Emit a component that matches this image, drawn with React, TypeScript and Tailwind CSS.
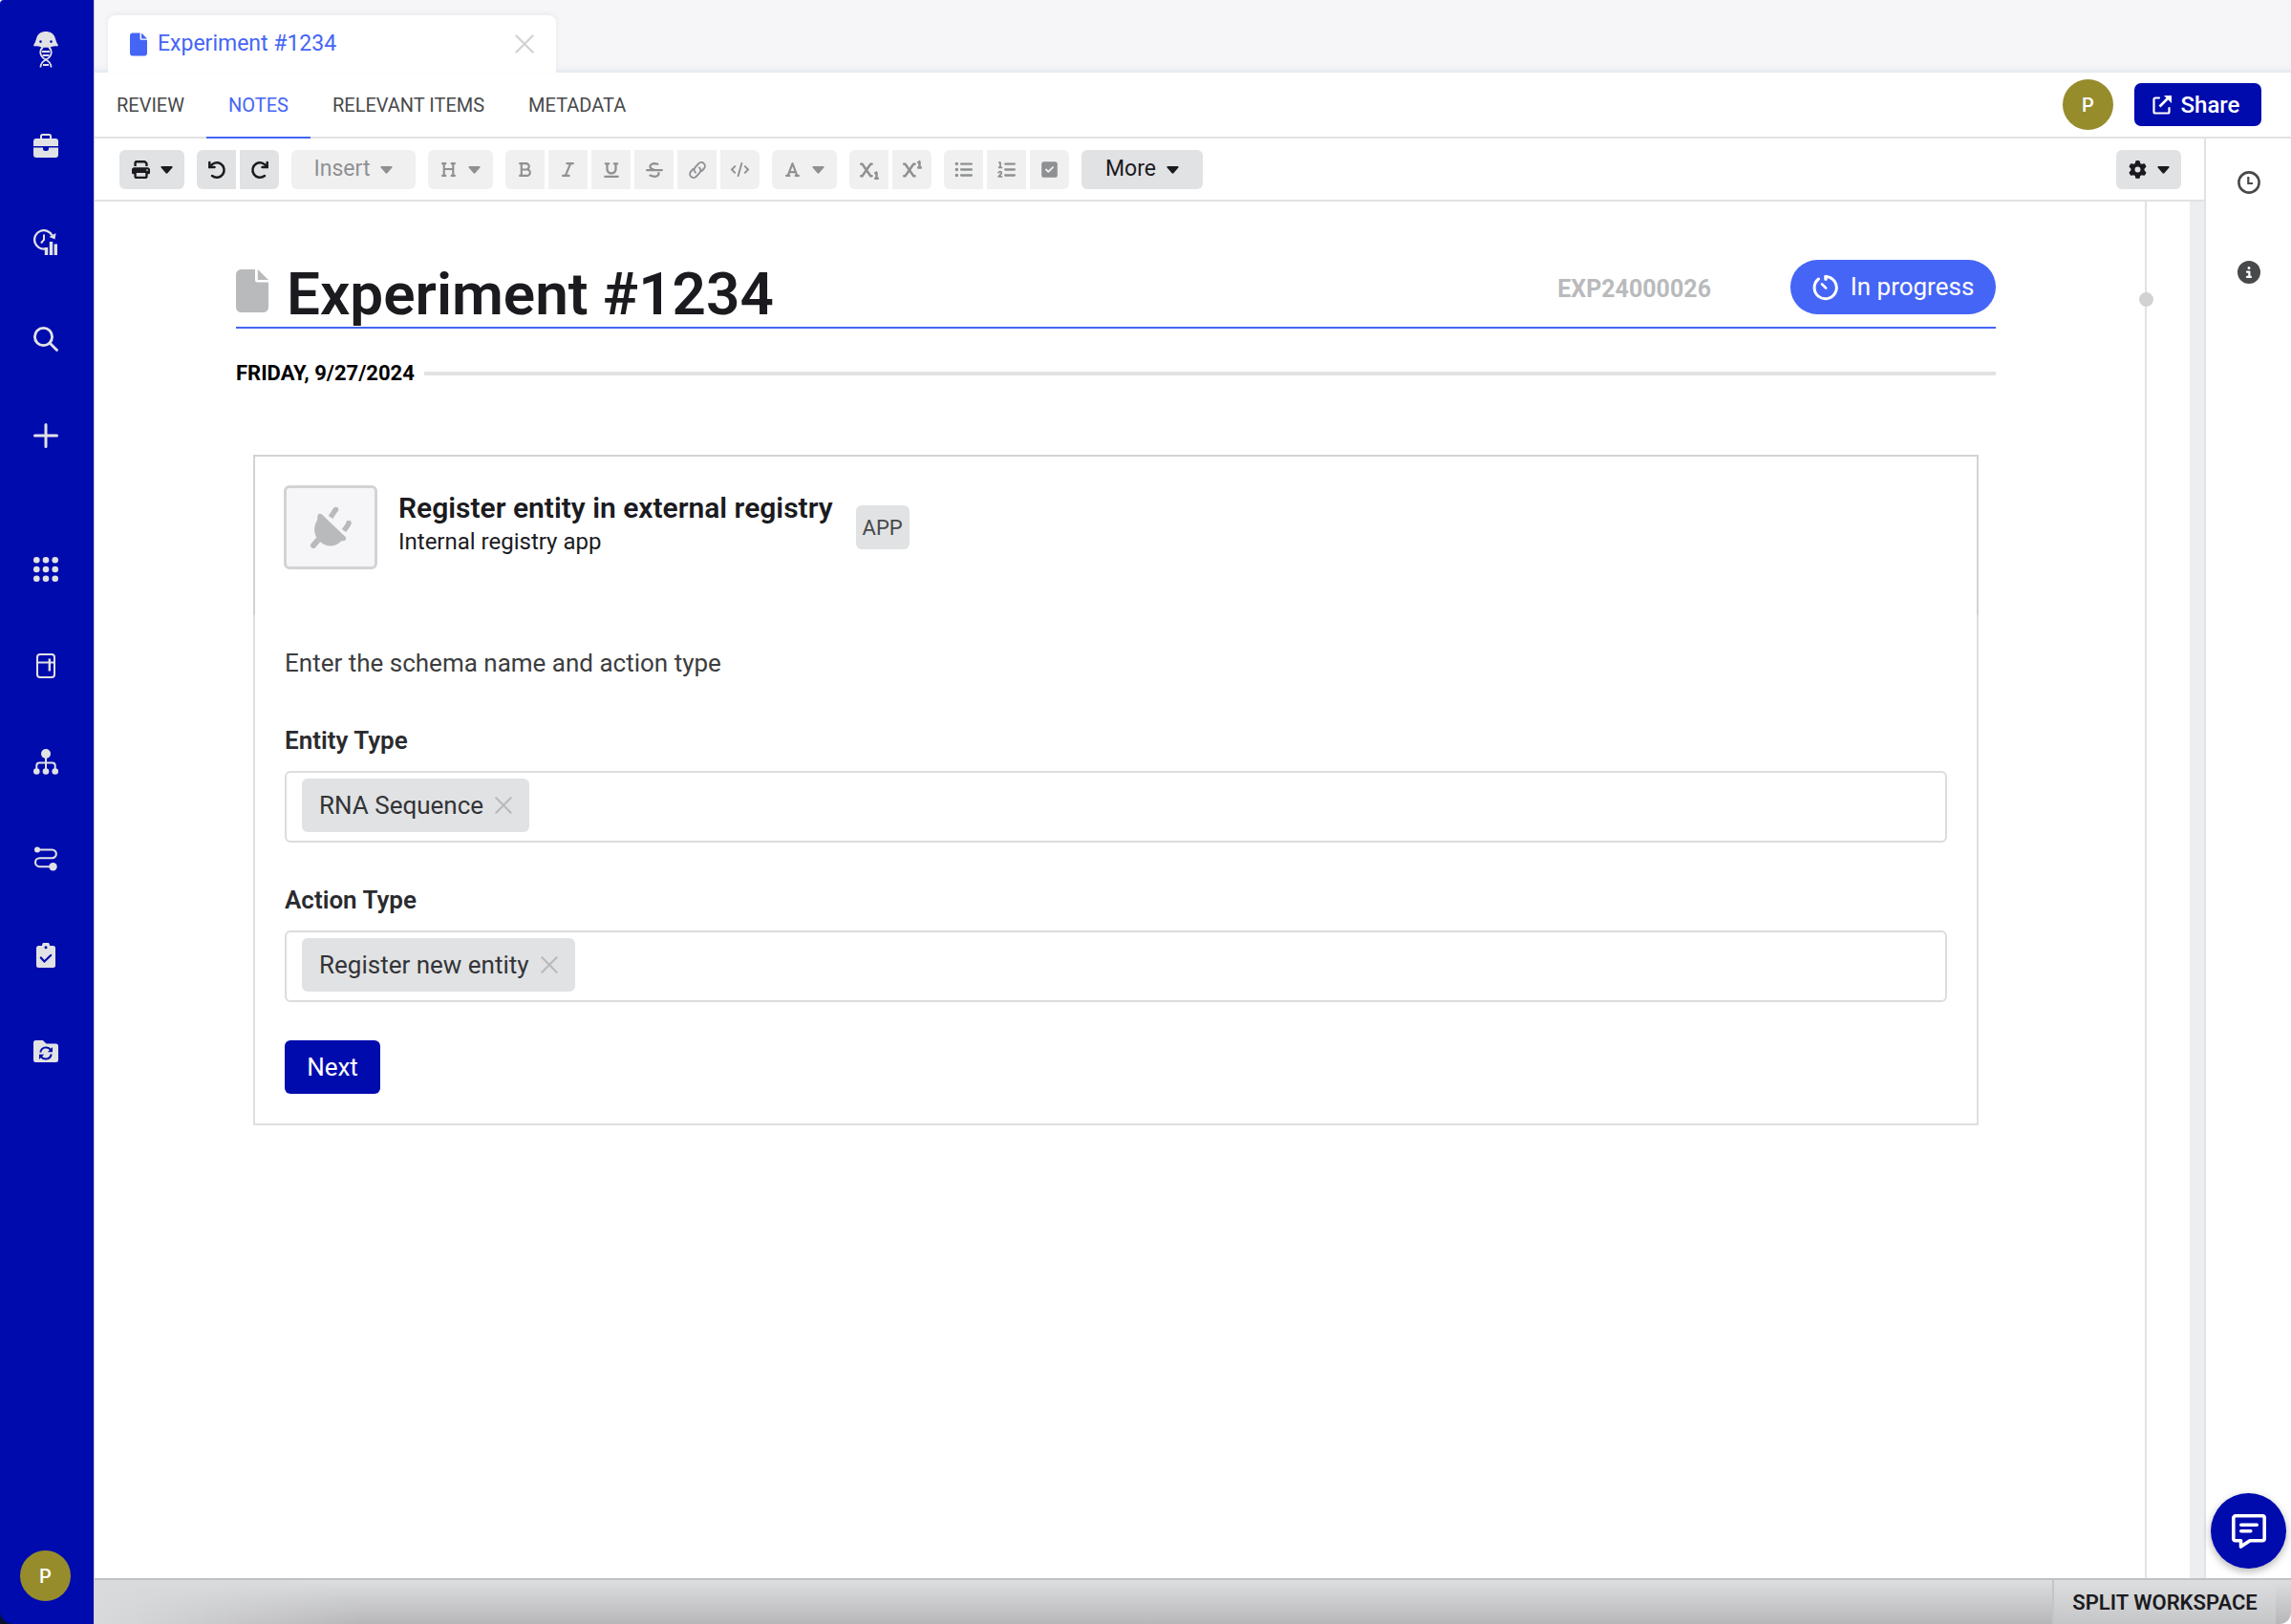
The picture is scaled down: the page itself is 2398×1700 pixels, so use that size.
import type { ReactNode } from "react"
import clsx from "clsx"
import {
  FaBold,
  FaCircleInfo,
  FaCode,
  FaFont,
  FaGear,
  FaHeading,
  FaItalic,
  FaListOl,
  FaListUl,
  FaPrint,
  FaSquareCheck,
  FaStrikethrough,
  FaSubscript,
  FaSuperscript,
  FaUnderline,
} from "react-icons/fa6"

function LogoIcon() {
  return (
    <svg width="26" height="38" viewBox="0 0 26 38" fill="none" stroke="currentColor" strokeWidth="1.8">
      <path
        fill="currentColor"
        stroke="none"
        fillRule="evenodd"
        d="M13 0c4.500 0 8 2 9.500 6 1 3 1.700 6.500 3.500 8.200l-1 1.300c-4-.8-6 .5-8 1.300H9c-2-.8-4-2.100-8-1.300l-1-1.300C1.800 12.500 2.500 9 3.500 6 5 2 8.500 0 13 0ZM7.500 9.300a1.300 1.300 0 1 0 0 2.600 1.300 1.300 0 0 0 0-2.600Zm11 0a1.300 1.300 0 1 0 0 2.600 1.300 1.300 0 0 0 0-2.600Z"
      />
      <path d="M10 16c-4 4-4 10 3 13.500 4 2 5.500 4.500 5.500 8" />
      <path d="M16 16c4 4 4 10-3 13.500-4 2-5.500 4.500-5.500 8" />
      <path d="M9 21h8M9.500 25h7M10 35h6" />
    </svg>
  )
}

function BriefcaseIcon() {
  return (
    <svg width="26" height="25" viewBox="0 0 26 25" fill="currentColor">
      <path fillRule="evenodd" d="M7 5V2.500A2.500 2.500 0 0 1 9.500 0h7A2.500 2.500 0 0 1 19 2.500V5h4a3 3 0 0 1 3 3v5H0V8a3 3 0 0 1 3-3Zm2 0h8V2H9Z" />
      <path d="M0 14.500h10v1a2.500 2.500 0 0 0 2.500 2.500h1a2.500 2.500 0 0 0 2.500-2.500v-1h10V22a3 3 0 0 1-3 3H3a3 3 0 0 1-3-3Z" />
    </svg>
  )
}

function InsightsIcon() {
  return (
    <svg width="26" height="27" viewBox="0 0 26 27" fill="none" stroke="currentColor" strokeWidth="2.300">
      <path d="M12 20.500A9.700 9.700 0 1 1 19.500 6.500" />
      <path fill="currentColor" stroke="none" d="m23.500 4-1 6.500-6-2.500Z" />
      <path strokeWidth="2" d="M11 5.500V11l-3 3.500" />
      <path strokeWidth="3.400" d="M13.500 19v8M18.500 13v14M23.300 15.500V27" />
    </svg>
  )
}

function SearchIcon() {
  return (
    <svg width="26" height="26" viewBox="0 0 26 26" fill="none" stroke="currentColor" strokeWidth="2.800" strokeLinecap="round">
      <circle cx="10.500" cy="10.500" r="9.100" />
      <path d="m17.500 17.500 7 7" />
    </svg>
  )
}

function PlusIcon() {
  return (
    <svg width="26" height="26" viewBox="0 0 26 26" stroke="currentColor" strokeWidth="3" strokeLinecap="round">
      <path d="M13 1.500v23M1.500 13h23" />
    </svg>
  )
}

function GridIcon() {
  const steps = [3.3, 13, 22.7]
  return (
    <svg width="26" height="26" viewBox="0 0 26 26" fill="currentColor">
      {steps.map((y) => steps.map((x) => <circle key={`${x}-${y}`} cx={x} cy={y} r="3.300" />))}
    </svg>
  )
}

function FridgeIcon() {
  return (
    <svg width="20" height="26" viewBox="0 0 20 26" fill="none" stroke="currentColor" strokeWidth="2">
      <rect x="1" y="1" width="18" height="24" rx="3" />
      <path d="M1 9.500h18" />
      <path strokeWidth="2.400" d="M13.800 5.500v13" />
    </svg>
  )
}

function HierarchyIcon() {
  return (
    <svg width="26" height="27" viewBox="0 0 26 27" fill="none" stroke="currentColor" strokeWidth="2">
      <path d="M13 8v16M3.300 22v-4.500a3 3 0 0 1 3-3h13.400a3 3 0 0 1 3 3V22" />
      <g fill="currentColor" stroke="none">
        <circle cx="13" cy="5" r="5" />
        <circle cx="3.300" cy="23.500" r="3.300" />
        <circle cx="13" cy="23.500" r="3.300" />
        <circle cx="22.700" cy="23.500" r="3.300" />
      </g>
    </svg>
  )
}

function RouteIcon() {
  return (
    <svg width="26" height="26" viewBox="0 0 26 26" fill="none" stroke="currentColor" strokeWidth="2.100">
      <path d="M4 3.500h15.500a4.300 4.300 0 0 1 0 8.700h-13a4.500 4.500 0 0 0 0 9H20" />
      <circle cx="4" cy="3.500" r="3" fill="currentColor" stroke="none" />
      <circle cx="20.500" cy="21.300" r="4.200" fill="currentColor" stroke="none" />
    </svg>
  )
}

function ClipboardIcon() {
  return (
    <svg width="20" height="26" viewBox="0 0 20 26">
      <path
        fill="currentColor"
        fillRule="evenodd"
        d="M6 3a4 4 0 0 1 8 0h3.500A2.500 2.500 0 0 1 20 5.500v18a2.500 2.500 0 0 1-2.500 2.500h-15A2.500 2.500 0 0 1 0 23.500v-18A2.500 2.500 0 0 1 2.500 3Zm4 .2a1.500 1.500 0 1 0 0 3 1.500 1.500 0 0 0 0-3Z"
      />
      <path d="m4.800 15.500 3.600 4 6.800-6.500" fill="none" stroke="#000bae" strokeWidth="2.200" strokeLinecap="round" />
    </svg>
  )
}

function FolderSyncIcon() {
  return (
    <svg width="26" height="23" viewBox="0 0 26 23">
      <path fill="currentColor" d="M0 2.500A2.500 2.500 0 0 1 2.500 0h7.300l3.700 3.500h10A2.500 2.500 0 0 1 26 6v14.500a2.500 2.500 0 0 1-2.500 2.500h-21A2.500 2.500 0 0 1 0 20.500Z" />
      <g fill="none" stroke="#000bae" strokeWidth="2">
        <path d="M7.300 12.500a6 6 0 0 1 10.700-2.700" />
        <path d="M18.700 14.500A6 6 0 0 1 8 17.200" />
      </g>
      <path fill="#000bae" d="M20 7v5.200h-5.200ZM6 20v-5.200h5.200Z" />
    </svg>
  )
}

function FileIcon({ className }: { className?: string }) {
  return (
    <svg viewBox="0 0 34 45" fill="currentColor" className={className}>
      <path d="M5.500 0H20v11a2.500 2.500 0 0 0 2.500 2.500H34v26a5.500 5.500 0 0 1-5.500 5.500h-23A5.500 5.500 0 0 1 0 39.500v-34A5.500 5.500 0 0 1 5.500 0Z" />
      <path d="M22.800 0 34 11H22.800Z" />
    </svg>
  )
}

function CloseIcon({ className }: { className?: string }) {
  return (
    <svg viewBox="0 0 20 20" fill="none" stroke="currentColor" strokeWidth="2.400" strokeLinecap="round" className={className}>
      <path d="m1.500 1.500 17 17m0-17-17 17" />
    </svg>
  )
}

function RotateIcon({ className }: { className?: string }) {
  return (
    <svg width="20" height="20" viewBox="0 0 20 20" fill="none" stroke="currentColor" strokeWidth="2.500" strokeLinecap="round" className={className}>
      <path d="M2.300 2v5H7.500" />
      <path d="M3 6.600A7.700 7.700 0 1 1 5 16" />
    </svg>
  )
}

function Caret() {
  return (
    <svg width="13" height="8" viewBox="0 0 14 9" fill="currentColor">
      <path d="M1.200 0h11.600a1 1 0 0 1 .8 1.700L8 8.100a1.400 1.400 0 0 1-2 0L.4 1.700A1 1 0 0 1 1.200 0Z" />
    </svg>
  )
}

function LinkIcon() {
  return (
    <svg width="20" height="20" viewBox="0 0 20 20" fill="none" stroke="currentColor" strokeWidth="1.900" strokeLinecap="round">
      <path d="M8 12.600a4 4 0 0 1-.3-5.500l3.600-3.900a3.800 3.800 0 0 1 5.500 5.300l-2.300 2.500" />
      <path d="M12 7.400a4 4 0 0 1 .3 5.500l-3.600 3.900a3.800 3.800 0 0 1-5.500-5.300l2.300-2.500" />
    </svg>
  )
}

function ShareIcon() {
  return (
    <svg width="20" height="20" viewBox="0 0 20 20" fill="none" stroke="currentColor" strokeWidth="2.200">
      <path strokeLinecap="round" d="M7 2.500H3A1.500 1.500 0 0 0 1.500 4v13A1.500 1.500 0 0 0 3 18.500h13a1.500 1.500 0 0 0 1.500-1.500v-4" />
      <path d="m7.500 11.500 9-9" strokeWidth="2.600" />
      <path d="M12 0h8v8Z" fill="currentColor" stroke="none" />
    </svg>
  )
}

function ProgressIcon() {
  return (
    <svg width="28" height="28" viewBox="0 0 28 28" fill="none" stroke="currentColor" strokeWidth="3" strokeLinecap="round">
      <path d="M6.500 5A11.600 11.600 0 1 0 14 2.500" />
      <path d="M14 2.500v2.800" strokeWidth="3.400" />
      <path d="m10 10.300 4.200 4.200" strokeWidth="2.600" />
    </svg>
  )
}

function PlugIcon() {
  return (
    <svg width="44" height="44" viewBox="0 0 44 44" fill="none" stroke="currentColor" strokeLinecap="round">
      <path d="M8.500 9.500a2.600 2.600 0 0 1 4.200-1.200l24.800 23.800a2.400 2.400 0 0 1-1.300 4L33 36.500C27 43 17.500 43 11 37 4 30.500 3.500 21.500 8 14.500Z" fill="currentColor" stroke="none" />
      <path strokeWidth="6" d="m4 41 6-7" />
      <path strokeWidth="5.500" strokeLinecap="butt" d="M22 11.500 27 4M36 25.500l5-7" />
      <circle cx="27.500" cy="3.500" r="2.800" fill="currentColor" stroke="none" />
      <circle cx="41" cy="17.500" r="2.800" fill="currentColor" stroke="none" />
    </svg>
  )
}

function ClockIcon() {
  return (
    <svg width="24" height="24" viewBox="0 0 24 24" fill="none" stroke="currentColor" strokeWidth="2.600">
      <circle cx="12" cy="12" r="10.600" />
      <path strokeWidth="2.200" d="M11.300 6v7H16" />
    </svg>
  )
}

function ChatIcon() {
  return (
    <svg width="36" height="36" viewBox="0 0 36 36" fill="none" stroke="currentColor" strokeWidth="3.600" strokeLinejoin="round">
      <path d="M4 1.800h28A2.200 2.200 0 0 1 34.200 4v21.500a2.200 2.200 0 0 1-2.200 2.200H19L9.500 34v-6.300H4a2.200 2.200 0 0 1-2.200-2.200V4A2.200 2.200 0 0 1 4 1.800Z" />
      <path strokeLinecap="round" d="M9.800 11.300h16.400M9.800 17.800h10" />
    </svg>
  )
}

const SIDEBAR_ITEMS = [
  { label: "Home", icon: <LogoIcon /> },
  { label: "Projects", icon: <BriefcaseIcon /> },
  { label: "Insights", icon: <InsightsIcon /> },
  { label: "Search", icon: <SearchIcon /> },
  { label: "Create", icon: <PlusIcon /> },
  { label: "Apps", icon: <GridIcon />, spaced: true },
  { label: "Inventory", icon: <FridgeIcon /> },
  { label: "Registry", icon: <HierarchyIcon /> },
  { label: "Workflows", icon: <RouteIcon /> },
  { label: "Requests", icon: <ClipboardIcon /> },
  { label: "Sync", icon: <FolderSyncIcon /> },
]

const NAV_TABS = ["REVIEW", "NOTES", "RELEVANT ITEMS", "METADATA"]

function Avatar() {
  return (
    <span className="flex size-[53px] items-center justify-center rounded-full bg-[#968c2c] text-[20px] font-medium text-white">
      P
    </span>
  )
}

function Sidebar() {
  return (
    <div className="w-[98px] shrink-0 bg-linear-to-b from-white to-[#06122e]">
      <aside className="flex h-full flex-col items-center justify-between rounded-tl-[4px] rounded-bl-[14px] bg-[#000bae] pt-px pr-[3px] pb-[24px] text-[#e1e2e4]">
        <nav className="flex flex-col items-center">
          {SIDEBAR_ITEMS.map(({ label, icon, spaced }) => (
            <a
              key={label}
              href="#"
              aria-label={label}
              className={clsx("flex h-[101px] w-[60px] items-center justify-center", spaced && "mt-[39px]")}
            >
              {icon}
            </a>
          ))}
        </nav>
        <Avatar />
      </aside>
    </div>
  )
}

type ToolProps = {
  label?: string
  dark?: boolean
  className?: string
  children: ReactNode
}

function Tool({ label, dark, className = "w-[41px]", children }: ToolProps) {
  return (
    <button
      type="button"
      aria-label={label}
      className={clsx(
        "flex h-[41px] items-center justify-center text-[23px]",
        dark ? "bg-[#e1e2e4] text-[#1b1b1f]" : "bg-[#f0f0f1] text-[#8f9092]",
        className,
      )}
    >
      {children}
    </button>
  )
}

function ToolGroup({ children }: { children: ReactNode }) {
  return <div className="flex gap-1 overflow-hidden rounded-[6px]">{children}</div>
}

function Toolbar() {
  return (
    <div className="flex items-center justify-between border-b-2 border-[#e1e2e4] pt-[12px] pr-[24px] pb-[11px] pl-[26px]">
      <div className="flex gap-[13px]">
        <ToolGroup>
          <Tool label="Print" dark className="w-[68px] gap-[11px]">
            <FaPrint size={19} />
            <Caret />
          </Tool>
        </ToolGroup>
        <ToolGroup>
          <Tool label="Undo" dark><RotateIcon /></Tool>
          <Tool label="Redo" dark><RotateIcon className="-scale-x-100" /></Tool>
        </ToolGroup>
        <ToolGroup>
          <Tool className="w-[130px] gap-[11px]">
            Insert
            <Caret />
          </Tool>
        </ToolGroup>
        <ToolGroup>
          <Tool label="Heading" className="w-[68px] gap-[12px]">
            <FaHeading size={17} />
            <Caret />
          </Tool>
        </ToolGroup>
        <ToolGroup>
          <Tool label="Bold"><FaBold size={17} /></Tool>
          <Tool label="Italic"><FaItalic size={17} /></Tool>
          <Tool label="Underline"><FaUnderline size={18} /></Tool>
          <Tool label="Strikethrough"><FaStrikethrough size={18} /></Tool>
          <Tool label="Link"><LinkIcon /></Tool>
          <Tool label="Code"><FaCode size={19} /></Tool>
        </ToolGroup>
        <ToolGroup>
          <Tool label="Font" className="w-[68px] gap-[12px]">
            <FaFont size={17} />
            <Caret />
          </Tool>
        </ToolGroup>
        <ToolGroup>
          <Tool label="Subscript"><FaSubscript size={20} /></Tool>
          <Tool label="Superscript"><FaSuperscript size={20} /></Tool>
        </ToolGroup>
        <ToolGroup>
          <Tool label="Bulleted list"><FaListUl size={19} /></Tool>
          <Tool label="Numbered list"><FaListOl size={19} /></Tool>
          <Tool label="Checklist"><FaSquareCheck size={19} /></Tool>
        </ToolGroup>
        <ToolGroup>
          <Tool dark className="w-[127px] gap-[11px]">
            More
            <Caret />
          </Tool>
        </ToolGroup>
      </div>
      <ToolGroup>
        <Tool label="Settings" dark className="w-[68px] gap-[11px]">
          <FaGear size={19} />
          <Caret />
        </Tool>
      </ToolGroup>
    </div>
  )
}

function TagField({ id, label, value }: { id: string; label: string; value: string }) {
  return (
    <div>
      <label htmlFor={id} className="block text-[26px] leading-[32px] font-semibold text-[#2a2b2e]">
        {label}
      </label>
      <div className="mt-4 flex rounded-[6px] border-2 border-[#dcdcde] px-4 pt-[6px] pb-[9px]">
        <span className="flex h-[56px] shrink-0 items-center gap-[12px] rounded-[6px] bg-[#e1e2e4] px-[18px] text-[26px] text-[#333437]">
          {value}
          <button type="button" aria-label={`Remove ${value}`} className="text-[#b9babc]">
            <CloseIcon className="size-[18px]" />
          </button>
        </span>
        <input id={id} type="text" className="min-w-0 flex-1 px-3 text-[26px] outline-none" />
      </div>
    </div>
  )
}

function AppCard() {
  return (
    <section className="mx-[18px] mt-[69px]">
      <div className="flex items-center border-x-2 border-t-2 border-[#d2d3d5] px-[30px] pt-[30px] pb-[48px]">
        <div className="flex h-[88px] w-[98px] items-center justify-center rounded-[6px] border-3 border-[#d2d3d5] bg-[#f6f6f9] text-[#b9babc]">
          <PlugIcon />
        </div>
        <div className="ml-[22px] pb-[6px] text-[#1b1b1f]">
          <h2 className="text-[30px] leading-[36px] font-semibold">Register entity in external registry</h2>
          <p className="text-[24px] leading-[34px]">Internal registry app</p>
        </div>
        <span className="ml-[24px] flex h-[46px] w-[56px] items-center justify-center rounded-[6px] bg-[#e1e2e4] text-[22px] text-[#48494b]">
          APP
        </span>
      </div>
      <form className="border-x-2 border-b-2 border-[#e0e0e2] px-[31px] pt-[34px] pb-[31px]">
        <p className="mb-[49px] text-[26px] leading-[32px] text-[#3c3d40]">Enter the schema name and action type</p>
        <div className="flex flex-col gap-[44px]">
          <TagField id="entity-type" label="Entity Type" value="RNA Sequence" />
          <TagField id="action-type" label="Action Type" value="Register new entity" />
        </div>
        <button type="button" className="mt-[40px] h-[56px] w-[100px] rounded-[6px] bg-[#000bae] text-[26px] text-white">
          Next
        </button>
      </form>
    </section>
  )
}

function Document() {
  return (
    <article className="min-w-0 flex-1 border-r-2 border-[#e1e2e4] pr-[156px] pl-[148px]">
      <header className="flex h-[133px] items-end justify-between border-b-2 border-[#4565f6]">
        <div className="flex items-center gap-[19px]">
          <FileIcon className="mb-2 h-[45px] w-[34px] text-[#b9babc]" />
          <h1 className="text-[62px] leading-[68px] font-semibold text-[#1b1b1f]">Experiment #1234</h1>
        </div>
        <div className="flex items-center gap-[83px] pb-[13px]">
          <span className="pt-1 text-[25px] font-bold text-[#b9babc]">EXP24000026</span>
          <button
            type="button"
            className="flex h-[57px] w-[215px] items-center justify-center gap-[12px] rounded-full bg-[#4565f6] text-[26px] text-white"
          >
            <ProgressIcon />
            In progress
          </button>
        </div>
      </header>
      <div className="mt-[31px] flex items-center gap-[10px]">
        <h3 className="text-[22px] leading-[32px] font-bold text-black">FRIDAY, 9/27/2024</h3>
        <div className="h-1 flex-1 bg-[#e1e2e4]" />
      </div>
      <AppCard />
    </article>
  )
}

export default function App() {
  return (
    <div className="flex min-h-screen bg-white font-['Roboto',sans-serif]">
      <Sidebar />
      <div className="flex min-w-0 flex-1 flex-col border-l border-[#c9cbd4]">
        <div className="flex h-[76px] items-end bg-[#f6f6f9] pl-[14px] shadow-[inset_0_-6px_6px_-4px_#dde3e8]">
          <div className="flex h-[60px] w-[469px] items-center rounded-t-[8px] bg-white px-[23px] text-[#4565f6] shadow-[0_-2px_6px_rgba(0,0,0,0.05)]">
            <FileIcon className="h-[25px] w-[18px]" />
            <span className="ml-[11px] flex-1 text-[23px]">Experiment #1234</span>
            <button type="button" aria-label="Close tab" className="text-[#d2d3d5]">
              <CloseIcon className="size-5" />
            </button>
          </div>
        </div>

        <div className="flex h-[69px] items-stretch justify-between border-b-2 border-[#e1e2e4] pr-[31px]">
          <nav className="-mb-[2px] flex">
            {NAV_TABS.map((tab) => (
              <a
                key={tab}
                href="#"
                className={clsx(
                  "flex items-center border-b-2 px-[23px] text-[20px]",
                  tab === "NOTES" ? "border-[#4565f6] text-[#4565f6]" : "border-transparent text-[#48494b]",
                )}
              >
                {tab}
              </a>
            ))}
          </nav>
          <div className="flex items-center gap-[22px]">
            <Avatar />
            <button
              type="button"
              className="flex h-[45px] w-[133px] items-center justify-center gap-[10px] rounded-[7px] bg-[#000bae] pr-1 text-[24px] font-medium text-white"
            >
              <ShareIcon />
              Share
            </button>
          </div>
        </div>

        <div className="flex flex-1">
          <div className="flex min-w-0 flex-1 flex-col">
            <Toolbar />
            <div className="flex flex-1">
              <Document />
              <div className="relative w-[45px]">
                <span className="absolute top-[95px] -left-[8px] size-[15px] rounded-full bg-[#d2d2d4]" />
              </div>
              <div className="w-[15px] bg-[#edeef0]" />
            </div>
          </div>
          <aside className="flex w-[91px] flex-col items-center gap-[70px] border-l-2 border-[#e1e2e4] pt-[34px] text-[#48494b]">
            <button type="button" aria-label="History"><ClockIcon /></button>
            <button type="button" aria-label="Info"><FaCircleInfo size={24} /></button>
          </aside>
        </div>

        <footer className="flex h-[48px] justify-end overflow-hidden rounded-br-[12px] border-t-2 border-[#bfc2c5] bg-linear-to-b from-[#dddee0] to-[#b7b7b9] pr-[16px]">
          <div className="mr-auto w-[280px] bg-linear-to-r from-[#d9dadc] to-transparent" />
          <button
            type="button"
            className="w-[234px] border-l-2 border-[#c4c5c7] bg-linear-to-b from-[#dddee0] to-[#c5c6c8] text-[22px] font-semibold text-[#1b1b1f]"
          >
            SPLIT WORKSPACE
          </button>
        </footer>
      </div>

      <button
        type="button"
        aria-label="Open chat"
        className="fixed right-[5px] bottom-[58px] flex size-[79px] items-center justify-center rounded-full bg-[#000bae] text-white shadow-[0_3px_8px_rgba(0,0,0,0.3)]"
      >
        <ChatIcon />
      </button>
    </div>
  )
}
